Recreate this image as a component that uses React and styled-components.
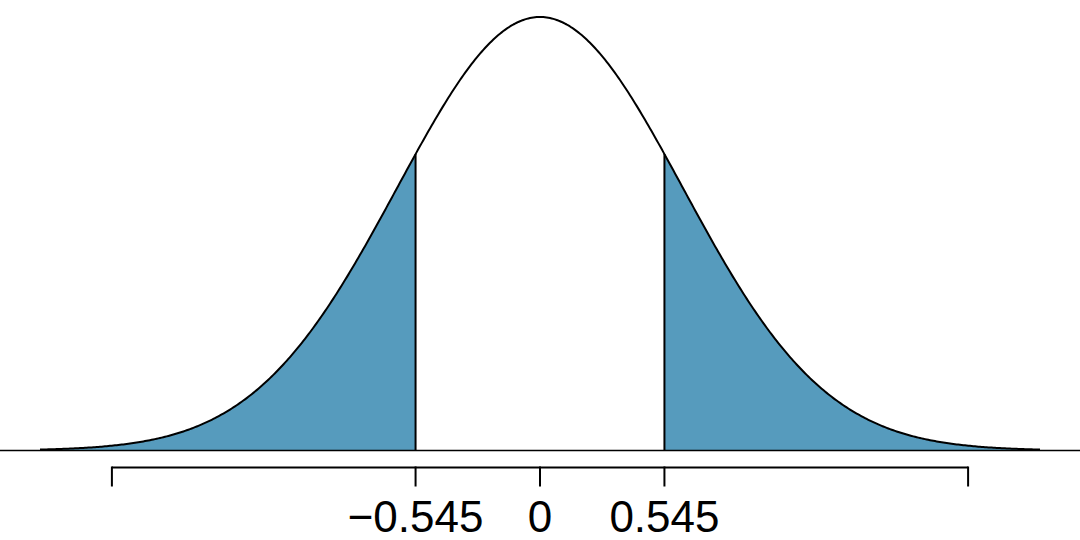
import React from 'react';
import styled, { createGlobalStyle } from 'styled-components';

const GlobalStyle = createGlobalStyle`
	html, body {
		margin: 0;
		padding: 0;
		background: #ffffff;
	}
`;

// chart geometry (pixels)
const W = 1080;
const H = 540;
const CX = 540;
const BASE = 450.5;
const PEAK = 17;
const SD = 142.7;
const CUT = 0.872;
const FILL = '#569BBD';

const density = (z) => BASE - (BASE - PEAK) * Math.exp((-z * z) / 2);
const toX = (z) => CX + z * SD;

const curvePoints = (from, to, steps = 240) => {
	const pts = [];
	for (let i = 0; i <= steps; i++) {
		const z = from + ((to - from) * i) / steps;
		pts.push(`${toX(z).toFixed(2)},${density(z).toFixed(2)}`);
	}
	return pts;
};

const tailPath = (from, to) =>
	`M${toX(from).toFixed(2)},${BASE} L${curvePoints(from, to).join(' L')} L${toX(to).toFixed(2)},${BASE} Z`;

const Figure = styled.div`
	width: ${W}px;
	height: ${H}px;
	background: #ffffff;
`;

const Chart = styled.svg`
	display: block;
	width: 100%;
	height: 100%;
`;

const TickLabel = styled.text`
	font-family: 'Liberation Sans', Arial, Helvetica, sans-serif;
	font-size: 44px;
	fill: #000000;
`;

const ticks = [
	{ z: -3 },
	{ z: -CUT, label: '\u22120.545' },
	{ z: 0, label: '0' },
	{ z: CUT, label: '0.545' },
	{ z: 3 },
];

const App = () => {
	const left = -500 / SD;
	const right = 500 / SD;
	return (
		<>
			<GlobalStyle />
			<Figure>
				<Chart viewBox={`0 0 ${W} ${H}`}>
					<path d={tailPath(left, -CUT)} fill={FILL} />
					<path d={tailPath(CUT, right)} fill={FILL} />
					<line x1={0} y1={BASE} x2={W} y2={BASE} stroke='#000' strokeWidth='1.5' />
					<polyline
						points={curvePoints(left, right, 600).join(' ')}
						fill='none'
						stroke='#000'
						strokeWidth='2'
						strokeLinejoin='round'
					/>
					<line x1={toX(-CUT)} y1={BASE} x2={toX(-CUT)} y2={density(CUT)} stroke='#000' strokeWidth='2' />
					<line x1={toX(CUT)} y1={BASE} x2={toX(CUT)} y2={density(CUT)} stroke='#000' strokeWidth='2' />
					{/* axis */}
					<line x1={toX(-3)} y1={467.5} x2={toX(3)} y2={467.5} stroke='#000' strokeWidth='2' />
					{ticks.map((t) => (
						<line key={t.z} x1={toX(t.z)} y1={466.5} x2={toX(t.z)} y2={486.5} stroke='#000' strokeWidth='2' />
					))}
					{ticks
						.filter((t) => t.label)
						.map((t) => (
							<TickLabel key={t.label} x={toX(t.z)} y={532} textAnchor='middle'>
								{t.label}
							</TickLabel>
						))}
				</Chart>
			</Figure>
		</>
	);
};

export default App;
